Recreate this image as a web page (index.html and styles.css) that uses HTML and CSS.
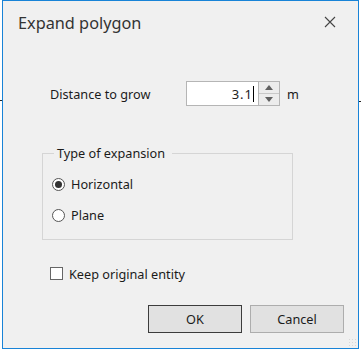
FILE: index.html
```html
<!doctype html>
<html lang="en">

<head>
	<meta charset="UTF-8">
	<title>Expand polygon</title>
	<link rel="stylesheet" href="styles.css">
</head>

<body>
	<div class="Backdrop">
		<span class="Dash DashLeft"></span>
		<div class="Dialog">
			<div class="TitleBar">
				<span class="Title">Expand polygon</span>
				<svg class="Close" width="12" height="12" viewBox="0 0 12 12">
					<path d="M1 1 L11 11 M11 1 L1 11" stroke="#444" stroke-width="1.1" fill="none" />
				</svg>
			</div>
			<div class="Content">
				<div class="DistanceRow">
					<span class="DistanceLabel">Distance to grow</span>
					<div class="Spin">
						<div class="SpinInput"><span class="Value">3.1</span><span class="Caret"></span></div>
						<div class="SpinButtons">
							<div class="SpinBtn SpinUp">
								<svg width="8" height="5" viewBox="0 0 8 5"><path d="M0 5 L4 0 L8 5 Z" fill="#606060" /></svg>
							</div>
							<div class="SpinBtn">
								<svg width="8" height="5" viewBox="0 0 8 5"><path d="M0 0 L4 5 L8 0 Z" fill="#606060" /></svg>
							</div>
						</div>
					</div>
					<span class="Unit">m</span>
				</div>
				<div class="GroupHead">
					<span class="GroupLine GroupLineStart"></span>
					<span class="GroupTitle">Type of expansion</span>
					<span class="GroupLine GroupLineEnd"></span>
				</div>
				<div class="Group">
					<label class="Option"><span class="Radio Checked"></span>Horizontal</label>
					<label class="Option"><span class="Radio"></span>Plane</label>
				</div>
				<label class="Keep"><span class="CheckBox"></span>Keep original entity</label>
				<div class="Buttons">
					<button class="Btn BtnDefault">OK</button>
					<button class="Btn">Cancel</button>
				</div>
			</div>
			<span class="Grip"></span>
		</div>
		<span class="Dash DashRight"></span>
	</div>
</body>

</html>
```
FILE: styles.css
```css
html,
body {
	margin: 0;
	background: #fff;
}

body {
	font-family: "Noto Sans", "Open Sans", sans-serif;
	font-size: 12.7px;
	color: #1b1b1b;
	width: 361px;
	height: 351px;
	overflow: hidden;
}

.Backdrop {
	position: relative;
	width: 361px;
	height: 351px;
}

/* bits of the app behind the dialog */
.Dash {
	position: absolute;
	height: 1px;
	background: #222;
}

.DashLeft {
	left: 0;
	top: 100px;
	width: 2px;
}

.DashRight {
	left: 359px;
	top: 101px;
	width: 2px;
}

.Dialog {
	position: relative;
	box-sizing: border-box;
	margin-left: 2px;
	width: 357px;
	height: 349px;
	border: 1px solid #1883d7;
	background: #f0f0f0;
}

.TitleBar {
	display: flex;
	align-items: center;
	justify-content: space-between;
	height: 44px;
	padding: 0 22px 0 15px;
}

.Title {
	font-size: 16.3px;
	color: #333;
}

.Close {
	margin-top: -2px;
}

.DistanceRow {
	display: flex;
	align-items: center;
	margin-top: 36px;
	padding-left: 47px;
	height: 25px;
}

.DistanceLabel {
	width: 136px;
}

.Spin {
	display: flex;
	height: 25px;
}

.SpinInput {
	box-sizing: border-box;
	width: 73px;
	height: 25px;
	border: 1px solid #b5b5b5;
	background: #fff;
	display: flex;
	align-items: center;
	justify-content: flex-end;
	padding-right: 4px;
	font-size: 13px;
	color: #222;
	letter-spacing: 1px;
}

.Caret {
	display: inline-block;
	width: 1px;
	height: 16px;
	background: #000;
}

.SpinButtons {
	box-sizing: border-box;
	width: 21px;
	height: 25px;
	border: 1px solid #b5b5b5;
	border-left: 0;
	background: #f0f0f0;
	display: flex;
	flex-direction: column;
}

.SpinBtn {
	flex: 1;
	display: flex;
	align-items: center;
	justify-content: center;
	background: #ececec;
}

.SpinUp {
	border-bottom: 1px solid #c8c8c8;
}

.Unit {
	margin-left: 7px;
}

.GroupHead {
	display: flex;
	align-items: center;
	height: 16px;
	margin: 39px 0 -8px 39px;
	width: 251px;
}

.GroupLine {
	height: 1px;
	background: #d5d5d5;
}

.GroupLineStart {
	width: 12px;
}

.GroupLineEnd {
	flex: 1;
}

.GroupTitle {
	padding: 0 7px 0 3px;
}

.Group {
	box-sizing: border-box;
	margin-left: 39px;
	padding: 1px 0 0 9px;
	width: 251px;
	height: 87px;
	border: 1px solid #d5d5d5;
	border-top: 0;
}

.Option {
	display: flex;
	align-items: center;
	height: 20px;
	margin-top: 20px;
}

.Option + .Option {
	margin-top: 11px;
}

.Radio {
	box-sizing: border-box;
	width: 13px;
	height: 13px;
	border: 1px solid #555;
	border-radius: 50%;
	background: #fff;
	margin-right: 6px;
	display: flex;
	align-items: center;
	justify-content: center;
}

.Radio.Checked::after {
	content: "";
	width: 7px;
	height: 7px;
	border-radius: 50%;
	background: #333;
}

.Keep {
	display: flex;
	align-items: center;
	height: 13px;
	margin: 27px 0 0 47px;
}

.CheckBox {
	box-sizing: border-box;
	width: 13px;
	height: 13px;
	border: 1px solid #666;
	background: #fff;
	margin-right: 6px;
}

.Buttons {
	display: flex;
	justify-content: flex-end;
	gap: 8px;
	margin-top: 25px;
	padding-right: 14px;
}

.Btn {
	box-sizing: border-box;
	width: 94px;
	height: 28px;
	border: 1px solid #adadad;
	background: #e1e1e1;
	font-family: inherit;
	font-size: 12.7px;
	color: #1b1b1b;
	padding: 0;
}

.BtnDefault {
	border-color: #3c3c3c;
}

.Grip {
	position: absolute;
	right: 2px;
	bottom: 2px;
	width: 8px;
	height: 8px;
	background: radial-gradient(circle, #c0c0c0 0.6px, transparent 0.8px) 0 0 / 3px 3px;
	opacity: 0.5;
}
```
